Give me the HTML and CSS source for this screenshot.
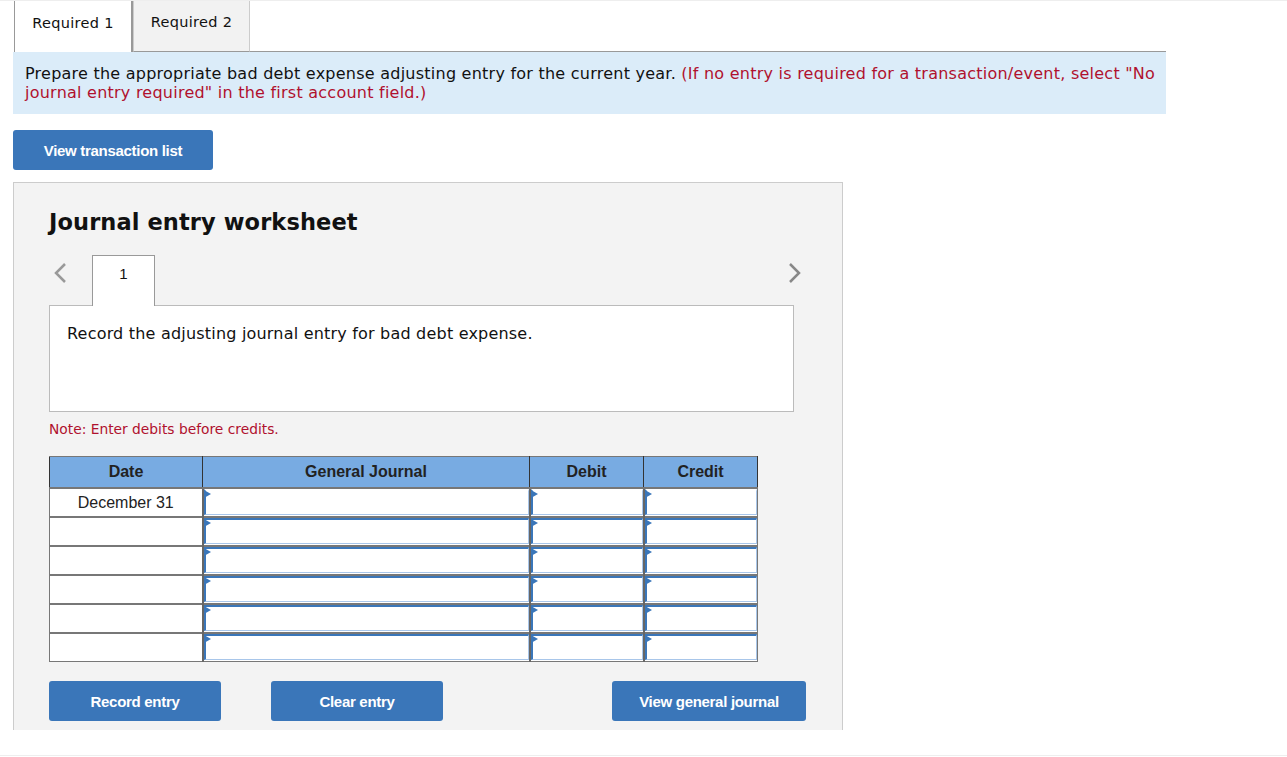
FILE: index.html
```html
<!DOCTYPE html>
<html lang="en">
<head>
  <meta charset="UTF-8">
  <title>Journal entry worksheet</title>
  <link rel="stylesheet" href="styles.css">
</head>
<body>

  <!-- Tabs -->
  <div class="tabs">
    <div class="tab activo">Required 1</div>
    <div class="tab">Required 2</div>
    <div class="tab-resto"></div>
  </div>

  <div class="instruccion">
    Prepare the appropriate bad debt expense adjusting entry for the current year.
    <span class="rojo">(If no entry is required for a transaction/event, select "No journal entry required" in the first account field.)</span>
  </div>

  <button class="boton boton-lista">View transaction list</button>

  <!-- Worksheet -->
  <div class="panel">
    <h2 class="titulo">Journal entry worksheet</h2>

    <div class="paginas">
      <span class="flecha gris">
        <svg width="14" height="22" viewBox="0 0 14 22"><path d="M12 2 L3 11 L12 20" fill="none" stroke="#999" stroke-width="2.5"/></svg>
      </span>
      <div class="pagina">1</div>
      <span class="flecha derecha">
        <svg width="14" height="22" viewBox="0 0 14 22"><path d="M2 2 L11 11 L2 20" fill="none" stroke="#888" stroke-width="2.5"/></svg>
      </span>
    </div>

    <div class="caja">Record the adjusting journal entry for bad debt expense.</div>

    <p class="nota">Note: Enter debits before credits.</p>

    <table class="tabla">
      <thead>
        <tr>
          <th class="col-fecha">Date</th>
          <th class="col-cuenta">General Journal</th>
          <th class="col-num">Debit</th>
          <th class="col-num">Credit</th>
        </tr>
      </thead>
      <tbody>
        <tr>
          <td class="fecha">December 31</td>
          <td><div class="campo"></div></td>
          <td><div class="campo"></div></td>
          <td><div class="campo"></div></td>
        </tr>
        <tr>
          <td class="fecha"></td>
          <td><div class="campo"></div></td>
          <td><div class="campo"></div></td>
          <td><div class="campo"></div></td>
        </tr>
        <tr>
          <td class="fecha"></td>
          <td><div class="campo"></div></td>
          <td><div class="campo"></div></td>
          <td><div class="campo"></div></td>
        </tr>
        <tr>
          <td class="fecha"></td>
          <td><div class="campo"></div></td>
          <td><div class="campo"></div></td>
          <td><div class="campo"></div></td>
        </tr>
        <tr>
          <td class="fecha"></td>
          <td><div class="campo"></div></td>
          <td><div class="campo"></div></td>
          <td><div class="campo"></div></td>
        </tr>
        <tr>
          <td class="fecha"></td>
          <td><div class="campo"></div></td>
          <td><div class="campo"></div></td>
          <td><div class="campo"></div></td>
        </tr>
      </tbody>
    </table>

    <div class="acciones">
      <button class="boton boton-accion">Record entry</button>
      <button class="boton boton-accion">Clear entry</button>
      <button class="boton boton-accion boton-diario">View general journal</button>
    </div>
  </div>

  <div class="pie"></div>

</body>
</html>
```

FILE: styles.css
```css
body {
  margin: 0;
  background: #fff;
  font-family: 'DejaVu Sans', Verdana, sans-serif;
  color: #111;
  border-top: 1px solid #eee;
}

.tabs {
  display: flex;
  padding-left: 14px;
  width: 1152px;
  height: 51px;
}

.tab {
  width: 117px;
  font-size: 14.5px;
  letter-spacing: 0.3px;
  display: flex;
  align-items: center;
  justify-content: center;
  padding-bottom: 8px;
  box-sizing: border-box;
  background: #f2f2f2;
  border-left: 1px solid #ccc;
  border-right: 1px solid #ccc;
  border-bottom: 1px solid #999;
}

.tab.activo {
  width: 119px;
  background: #fff;
  border-left: 1px solid #999;
  border-right: 2px solid #999;
  border-bottom: none;
}

.tab-resto {
  flex: 1;
  border-bottom: 1px solid #999;
}

.instruccion {
  margin-left: 13px;
  width: 1153px;
  height: 62px;
  box-sizing: border-box;
  background: #dbecf9;
  padding: 12px 8px 0 12px;
  font-size: 16px;
  letter-spacing: 0.24px;
  line-height: 19px;
}

.rojo {
  color: #b0112e;
}

.boton {
  border: none;
  border-radius: 3px;
  background-color: #3a76b9;
  color: #fff;
  font-family: 'Liberation Sans', Arial, sans-serif;
  font-weight: bold;
  font-size: 15px;
  letter-spacing: -0.3px;
  cursor: pointer;
}

.boton-lista {
  display: block;
  margin: 16px 0 0 13px;
  width: 200px;
  height: 40px;
}

.panel {
  margin: 12px 0 0 13px;
  width: 830px;
  height: 548px;
  box-sizing: border-box;
  background: #f3f3f3;
  border: 1px solid #ccc;
  border-bottom: none;
  padding: 0 48px 0 35px;
}

.titulo {
  margin: 23px 0 0 0;
  font-size: 22.5px;
  letter-spacing: 0.1px;
  line-height: 32px;
  font-weight: bold;
}

.paginas {
  display: flex;
  align-items: flex-end;
  margin-top: 17px;
  height: 50px;
}

.flecha {
  align-self: flex-start;
  margin-top: 7px;
  display: flex;
}

.flecha.gris {
  margin-left: 4px;
  margin-right: 25px;
}

.flecha.derecha {
  margin-left: auto;
  margin-right: -8px;
}

.pagina {
  width: 63px;
  height: 51px;
  box-sizing: border-box;
  background: #fff;
  border: 1px solid #999;
  border-bottom: none;
  margin-bottom: -1px;
  position: relative;
  z-index: 1;
  display: flex;
  justify-content: center;
  padding-top: 9px;
  font-family: 'Liberation Sans', Arial, sans-serif;
  font-size: 15px;
}

.caja {
  height: 107px;
  box-sizing: border-box;
  background: #fff;
  border: 1px solid #bbb;
  padding: 18px 17px 0 17px;
  font-size: 16px;
  letter-spacing: 0.2px;
  line-height: 20px;
}

.nota {
  margin: 9px 0 0 0;
  font-size: 13.8px;
  line-height: 16px;
  color: #b0112e;
}

.tabla {
  margin-top: 18px;
  border-collapse: collapse;
  font-family: 'Liberation Sans', Arial, sans-serif;
  width: 705px;
  table-layout: fixed;
  position: relative;
  top: 1px;
}

.tabla th {
  height: 30px;
  background: #78abe2;
  border: 1px solid #333;
  border-top-color: #777;
  font-size: 16px;
  font-weight: bold;
  color: #222;
  padding: 0;
}

.col-fecha { width: 152px; }
.col-cuenta { width: 326px; }
.col-num { width: 113px; }

.tabla td {
  height: 27px;
  border: 1px solid #777;
  border-top-width: 2px;
  padding: 0;
  background: #fff;
  vertical-align: top;
}

.tabla td.fecha {
  text-align: center;
  vertical-align: middle;
  font-size: 16px;
  color: #222;
}

.tabla td:not(.fecha) {
  border-left: 2px solid #666;
}

.campo {
  position: relative;
  height: 26px;
  box-sizing: border-box;
  border: 1px solid #a8c6ea;
  border-top: 2px solid #3a76b9;
  border-left: 2px solid #3a76b9;
}

.tabla tr:first-child .campo {
  border-top-color: #fff;
}

.campo::before {
  content: '';
  position: absolute;
  left: -2px;
  top: -1px;
  border-top: 4px solid transparent;
  border-bottom: 4px solid transparent;
  border-left: 7px solid #3a76b9;
}

.acciones {
  display: flex;
  margin-top: 20px;
}

.boton-accion {
  width: 172px;
  height: 40px;
  margin-right: 50px;
}

.boton-diario {
  width: 194px;
  margin-left: auto;
  margin-right: -12px;
}

.pie {
  margin-top: 25px;
  border-top: 1px solid #eee;
}
```
